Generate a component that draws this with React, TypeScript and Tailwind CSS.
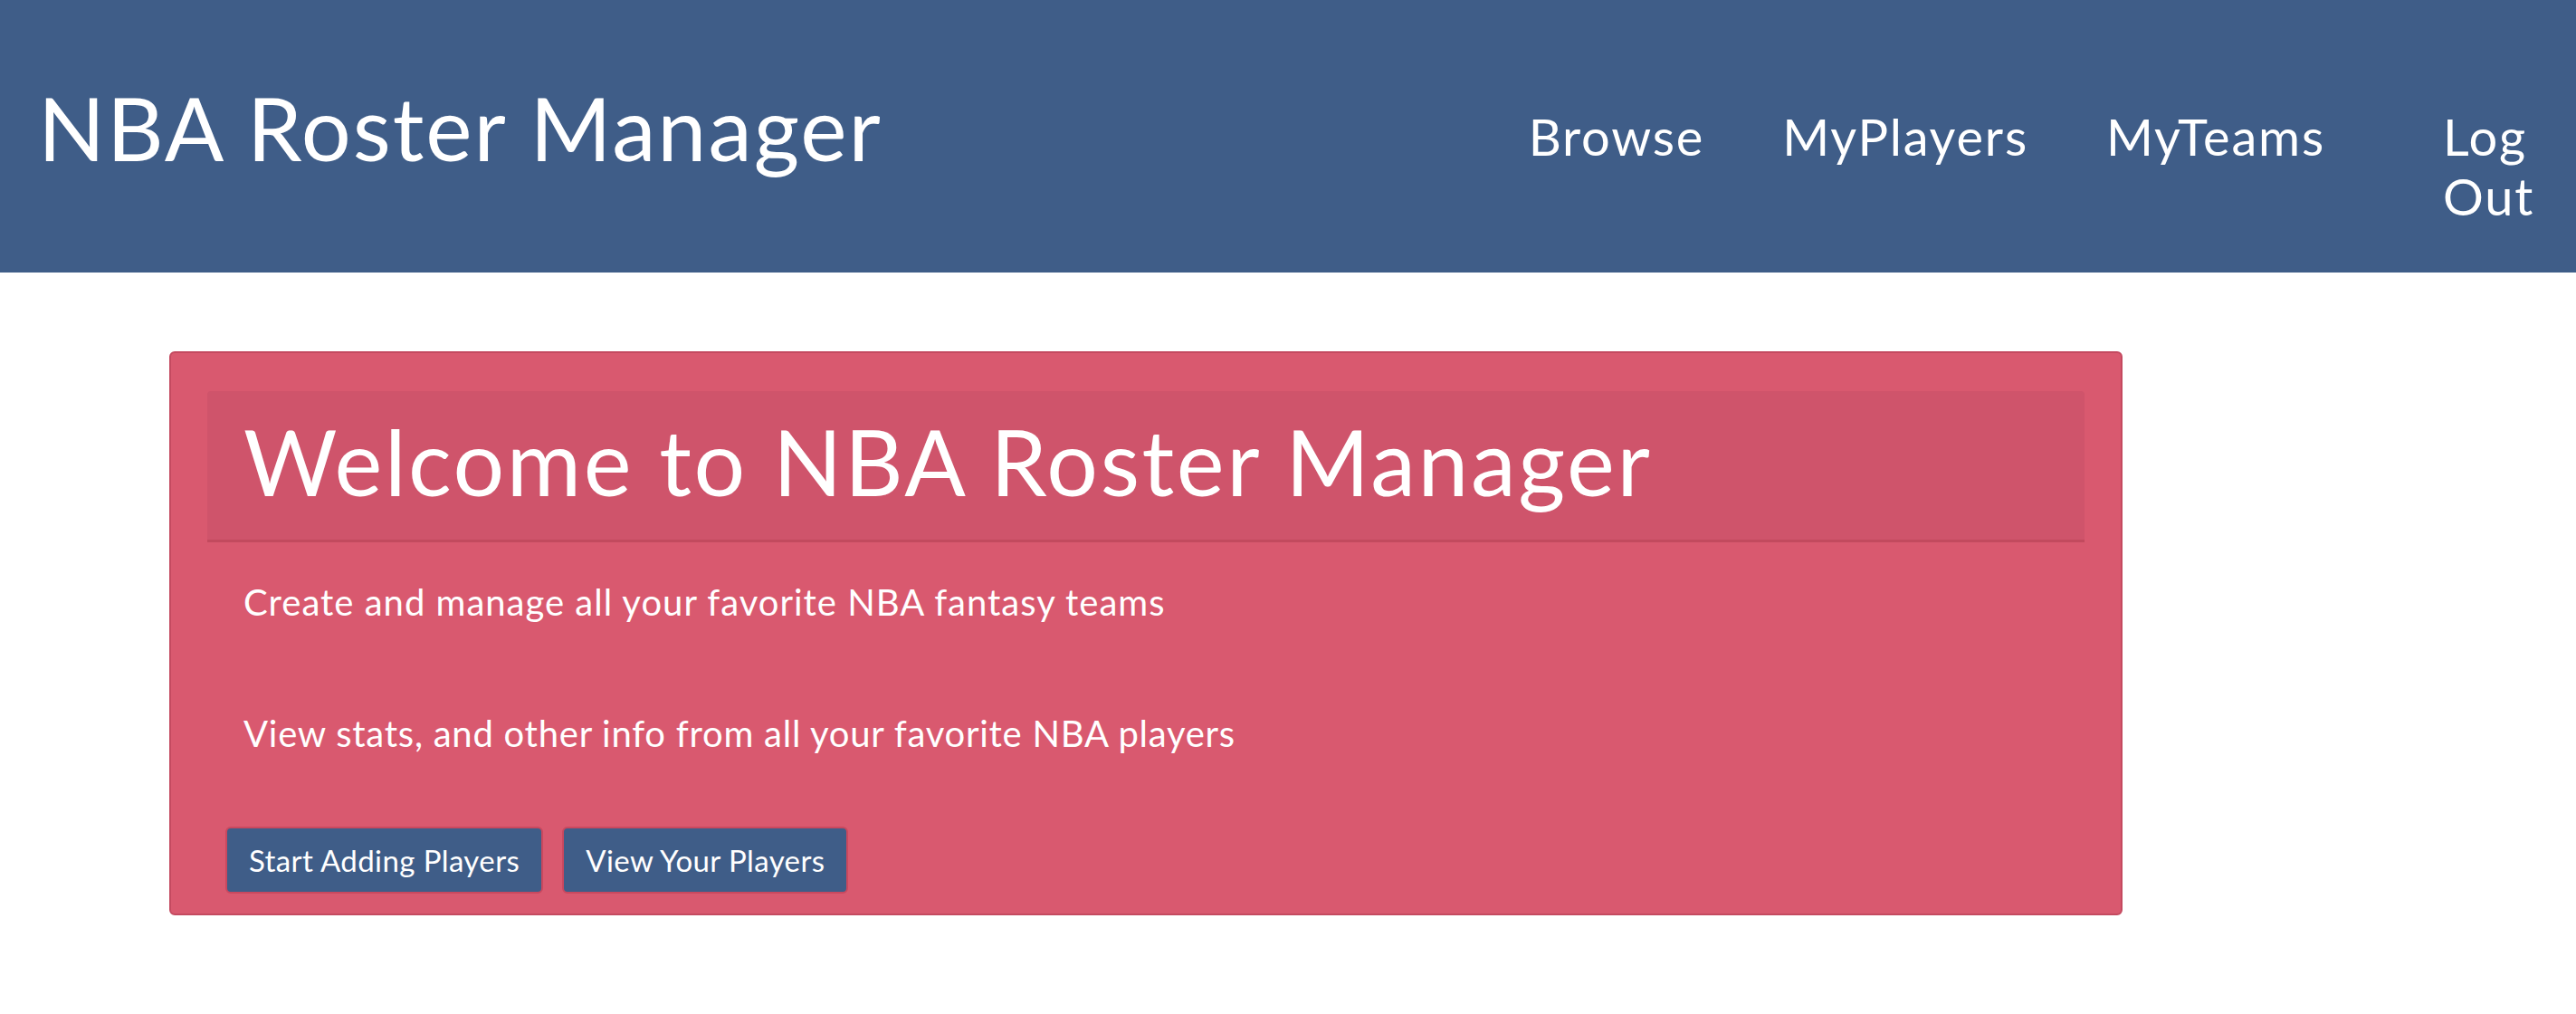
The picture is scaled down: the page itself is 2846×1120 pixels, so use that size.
export default function App() {
  const font = { fontFamily: 'Lato, "Open Sans", sans-serif' };
  return (
    <div className="min-h-[1120px] bg-white text-white" style={font}>
      <header className="flex h-[301px] items-start bg-[#3f5d88]">
        <div className="ml-[42px] mt-[92px] text-[97px] leading-none font-normal tracking-[2px]">NBA Roster Manager</div>
        <nav className="ml-auto mr-[47px] mt-[118px] flex items-start text-[56px] leading-[66px] tracking-[1.8px]">
          <a className="mr-[86px]">Browse</a>
          <a className="mr-[86px]">MyPlayers</a>
          <a className="mr-[130px]">MyTeams</a>
          <a className="w-[100px]">Log Out</a>
        </nav>
      </header>
      <main className="pt-[87px]">
        <div className="ml-[187px] w-[2158px] rounded-[6px] border-2 border-[#c44a60] bg-[#d9596f] px-[40px] pt-[42px] pb-[22px]">
          <div className="rounded-t-[4px] border-b-[3px] border-[#c24a5e] bg-[#cf546b] pl-[40px] pt-[27px] pb-[37px]">
            <h1 className="text-[100px] leading-none font-normal tracking-[2.6px]">Welcome to NBA Roster Manager</h1>
          </div>
          <div className="pl-[40px]">
            <p className="mt-[46px] text-[40px] leading-none tracking-[1px]">Create and manage all your favorite NBA fantasy teams</p>
            <p className="mt-[105px] text-[40px] leading-none tracking-[0.75px]">View stats, and other info from all your favorite NBA players</p>
          </div>
          <div className="mt-[83px] ml-[20px] flex gap-[21px]">
            <button className="h-[74px] rounded-[6px] border-2 border-[#c9485e] bg-[#3f5d88] px-[24px] text-[33px] leading-none tracking-[0.4px] text-white">Start Adding Players</button>
            <button className="h-[74px] rounded-[6px] border-2 border-[#c9485e] bg-[#3f5d88] px-[24px] text-[33px] leading-none tracking-[0.4px] text-white">View Your Players</button>
          </div>
        </div>
      </main>
    </div>
  );
}
